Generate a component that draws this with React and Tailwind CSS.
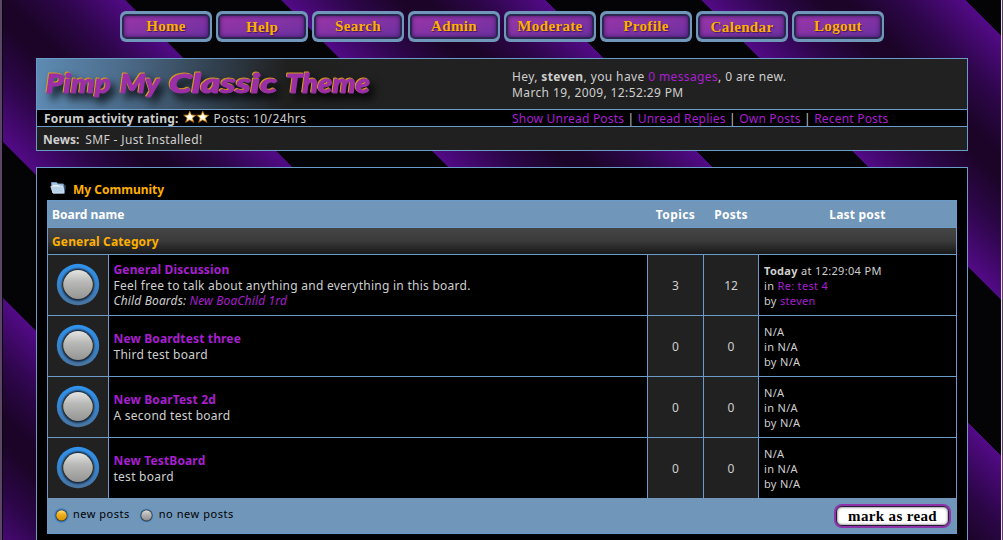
import React from 'react';

const nav = [
  { label: 'Home' },
  { label: 'Help', cls: 'pt-[2px]' },
  { label: 'Search' },
  { label: 'Admin' },
  { label: 'Moderate' },
  { label: 'Profile' },
  { label: 'Calendar', cls: 'pt-[2px]' },
  { label: 'Logout' },
];

const boards = [
  {
    name: 'General Discussion',
    desc: 'Feel free to talk about anything and everything in this board.',
    child: 'New BoaChild 1rd',
    topics: 3,
    posts: 12,
    last: true,
  },
  { name: 'New Boardtest three', desc: 'Third test board', topics: 0, posts: 0 },
  { name: 'New BoarTest 2d', desc: 'A second test board', topics: 0, posts: 0 },
  { name: 'New TestBoard', desc: 'test board', topics: 0, posts: 0 },
];

const cols = 'grid grid-cols-[60px_538px_55px_54px_197px] gap-px';

function NavButton({ label, cls = '' }) {
  return (
    <div className="h-[31px] w-[92px] rounded-[6px] bg-[#7096ba] px-[2px] pt-[3px] pb-[3px]">
      <div
        className={`flex h-[25px] items-center justify-center rounded-[5px] border-2 border-[#2b2750] bg-linear-to-br from-[#9a35a8] to-[#6c2f9f] font-['Liberation_Serif',serif] text-[15px] leading-none font-bold tracking-[0.35px] text-[#ffb000] shadow-[inset_0_0_4px_#3c1860] [text-shadow:1px_1px_1px_#3c1860] ${cls}`}
      >
        {label}
      </div>
    </div>
  );
}

function Star() {
  return (
    <svg width="13.5" height="14" viewBox="0 0 14 14">
      <defs>
        <radialGradient id="star">
          <stop offset="0.25" stopColor="#fffef0" />
          <stop offset="0.65" stopColor="#ffe9a8" />
          <stop offset="1" stopColor="#e09a18" />
        </radialGradient>
      </defs>
      <path d="M7 .8l1.7 4 4.7.3-3.6 3 1.6 4.7L7 10.1l-4.4 2.7 1.6-4.7-3.6-3 4.7-.3z" fill="url(#star)" stroke="#b86a08" strokeWidth="0.7" />
    </svg>
  );
}

function Orb() {
  return (
    <svg width="44" height="44" viewBox="0 0 44 44">
      <defs>
        <linearGradient id="ring" x1="0" y1="0" x2="0" y2="1">
          <stop offset="0" stopColor="#2f93ee" />
          <stop offset="0.5" stopColor="#3584cf" />
          <stop offset="1" stopColor="#4a739c" />
        </linearGradient>
        <radialGradient id="shade">
          <stop offset="0.7" stopColor="#17150f" />
          <stop offset="0.85" stopColor="#1c3048" />
          <stop offset="1" stopColor="#2d66a0" stopOpacity="0" />
        </radialGradient>
        <linearGradient id="ball" x1="0" y1="0" x2="0" y2="1">
          <stop offset="0" stopColor="#e4e4e2" />
          <stop offset="0.4" stopColor="#b9bab8" />
          <stop offset="1" stopColor="#959693" />
        </linearGradient>
      </defs>
      <ellipse cx="22" cy="21.5" rx="21.2" ry="20.7" fill="url(#ring)" />
      <circle cx="22" cy="21.7" r="18" fill="url(#shade)" />
      <ellipse cx="22" cy="21.5" rx="15" ry="13" fill="#a97c20" />
      <circle cx="22" cy="21.5" r="14.4" fill="url(#ball)" />
    </svg>
  );
}

function SmallOrb({ id, light, mid, dark, r }) {
  return (
    <svg width="15" height="15" viewBox="0 0 15 15">
      <defs>
        <linearGradient id={id} x1="0" y1="0" x2="0" y2="1">
          <stop offset="0" stopColor={light} />
          <stop offset="0.4" stopColor={mid} />
          <stop offset="1" stopColor={dark} />
        </linearGradient>
      </defs>
      <circle cx="7.5" cy="7.5" r={r} fill="#3d83c4" />
      <circle cx="7.5" cy="7.5" r="5.9" fill="#3a352c" />
      <circle cx="7.5" cy="7.4" r="5.2" fill={`url(#${id})`} />
    </svg>
  );
}

function Folder() {
  return (
    <svg width="16" height="14" viewBox="0 0 16 14" className="-mt-[4px]">
      <path d="M1.5 3V1.5h5L8 3h5.5v9H3z" fill="#a9c6e2" stroke="#6f93b8" />
      <path d="M2.5 4.5H9L10 3.5" stroke="#eaf3fb" fill="none" />
      <path d="M.8 5.5h12l1.7 6.6H3z" fill="#b8d2ea" stroke="#dcebf7" strokeWidth="0.8" />
      <path d="M14 3.5l1 1-.5 7.5" stroke="#5b7fa5" fill="none" />
    </svg>
  );
}

function Logo() {
  return (
    <svg
      width="400"
      height="50"
      viewBox="0 0 400 50"
      className="font-['Lato',sans-serif] text-[26px] font-black italic"
      fill="#9a2fa6"
      stroke="#9a2fa6"
      strokeWidth="1"
      strokeLinejoin="round"
    >
      <g className="[filter:drop-shadow(-1px_-1px_0_#d79a1c)_drop-shadow(5px_6px_4px_#000000cc)]">
        <text x="9" y="34" textLength="65" lengthAdjust="spacingAndGlyphs">Pimp</text>
        <text x="83" y="34" textLength="40" lengthAdjust="spacingAndGlyphs">My</text>
        <text x="132" y="34" textLength="108" lengthAdjust="spacingAndGlyphs">Classic</text>
        <text x="249" y="34" textLength="84" lengthAdjust="spacingAndGlyphs">Theme</text>
      </g>
    </svg>
  );
}

const link = 'text-[#a81fd0]';

export default function App() {
  return (
    <div className="flex h-[540px] w-[1003px] overflow-hidden bg-[repeating-linear-gradient(45deg,#520a86_-13.4px,#2c0648_35px,#1c0429_70px,#1c0429_90px,#2c0648_125px,#520a86_173.2px,#040407_173.3px,#040407_283.5px,#520a86_283.6px)] font-['Noto_Sans',sans-serif] text-[12px] text-[#cfcfcf]">
      <div className="w-[3px] shrink-0 border-r border-black bg-[#5e4468]" />
      <div className="w-[998px] shrink-0 pt-[11px] pl-[33px]">
        <nav className="flex gap-1 pl-[84px]">
          {nav.map((n) => (
            <NavButton key={n.label} {...n} />
          ))}
        </nav>

        <header className="mt-[16px] h-[93px] w-[932px] border border-[#6b9bc8] bg-[#202020]">
          <div className="flex h-[50px] bg-[linear-gradient(90deg,#5e8bb3_0px,#4b6a88_90px,#2e3a46_190px,#20201f_250px,#212121_330px)]">
            <div className="w-[475px]"><Logo /></div>
            <div className="pt-[10px] leading-[16px] tracking-[0.38px]">
              <div>
                Hey, <b>steven</b>, you have <span className={link}>0 messages</span>, 0 are new.
              </div>
              <div>March 19, 2009, 12:52:29 PM</div>
            </div>
          </div>
          <div className="flex h-[18px] items-center border-y border-[#6b9bc8] bg-black leading-[16px]">
            <div className="flex w-[475px] items-center pt-px pl-[7px]">
              <b className="tracking-[0.22px]">Forum activity rating:</b>
              <span className="-mt-[3px] ml-1 flex"><Star /><Star /></span>
              <span className="ml-1 tracking-[0.4px]">Posts: 10/24hrs</span>
            </div>
            <div className="pt-px tracking-[0.2px]">
              <span className={link}>Show Unread Posts</span> | <span className={link}>Unread Replies</span> |{' '}
              <span className={link}>Own Posts</span> | <span className={link}>Recent Posts</span>
            </div>
          </div>
          <div className="flex h-[23px] items-center gap-[6px] pt-[2px] pl-[6px]">
            <b>News:</b>
            <span className="tracking-[0.36px]">SMF - Just Installed!</span>
          </div>
        </header>

        <main className="mt-[16px] h-[390px] w-[932px] border border-[#6b9bc8] bg-black px-[10px] pt-[12px]">
          <div className="flex h-[20px] items-center gap-[7px] pl-[3px] font-bold text-[#ffb000]">
            <Folder />
            <span>My Community</span>
          </div>
          <div className="flex w-[910px] flex-col gap-px border border-[#6b9bc8] bg-[#6b9bc8]">
            <div className={`${cols} h-[26px] items-center bg-[#7096ba] pt-[2px] font-bold text-white`}>
              <span className="col-span-2 pl-[4px]">Board name</span>
              <span className="text-center tracking-[0.4px]">Topics</span>
              <span className="text-center tracking-[0.3px]">Posts</span>
              <span className="text-center tracking-[0.2px]">Last post</span>
            </div>
            <div className="flex h-[26px] items-center bg-linear-to-b from-[#454545] via-[#3a3a3a] to-[#191919] pt-[2px] pl-[4px] font-bold tracking-[0.15px] text-[#ffb000]">
              <span>General Category</span>
            </div>
            {boards.map((b) => (
              <div key={b.name} className={`${cols} h-[60px] leading-[15.5px]`}>
                <div className="flex items-center justify-center bg-[#212121]"><Orb /></div>
                <div className="flex flex-col justify-center bg-black pt-px pl-[4.5px]">
                  <b className={`tracking-[0.15px] ${link}`}>{b.name}</b>
                  <span className="tracking-[0.26px]">{b.desc}</span>
                  {b.child && (
                    <i className="tracking-[0.15px]">Child Boards: <span className={link}>{b.child}</span></i>
                  )}
                </div>
                <div className="flex items-center justify-center bg-[#212121] pt-[2px]">{b.topics}</div>
                <div className="flex items-center justify-center bg-[#212121] pt-[2px]">{b.posts}</div>
                <div className="flex flex-col justify-center bg-black pt-px pl-[5px] text-[11px] leading-[15.3px] tracking-[0.32px]">
                  {b.last ? (
                    <>
                      <span><b>Today</b> at 12:29:04 PM</span>
                      <span>in <span className={link}>Re: test 4</span></span>
                      <span>by <span className={link}>steven</span></span>
                    </>
                  ) : (
                    <>
                      <span>N/A</span>
                      <span>in N/A</span>
                      <span>by N/A</span>
                    </>
                  )}
                </div>
              </div>
            ))}
            <div className="-mt-px flex h-[35px] items-center bg-[#7096ba] pr-[5px] pl-[6px] text-[11px] text-black">
              <SmallOrb id="on" light="#ffe28a" mid="#f0b020" dark="#d89400" r={7.3} />
              <span className="-mt-[2px] ml-[4px] tracking-[0.5px]">new posts</span>
              <span className="ml-[9px] flex items-center gap-[5px]">
                <SmallOrb id="off" light="#dddddd" mid="#b5b5b5" dark="#8d8d8d" r={6.8} />
                <span className="-mt-[2px] tracking-[0.55px]">no new posts</span>
              </span>
              <div className="ml-auto h-[24px] w-[117px] rounded-[8px] bg-[#8d35a8] p-[2px]">
                <div className="flex h-[20px] items-center justify-center rounded-[6px] border border-[#2b1838] bg-white pt-px font-['Liberation_Serif',serif] text-[15px] leading-none font-bold tracking-[0.35px] shadow-[inset_0_0_2px_1px_#aaa]">
                  mark as read
                </div>
              </div>
            </div>
          </div>
        </main>
      </div>
      <div className="w-[2px] shrink-0 border-l border-[#e8e4ea] bg-[#5e4468]" />
    </div>
  );
}
